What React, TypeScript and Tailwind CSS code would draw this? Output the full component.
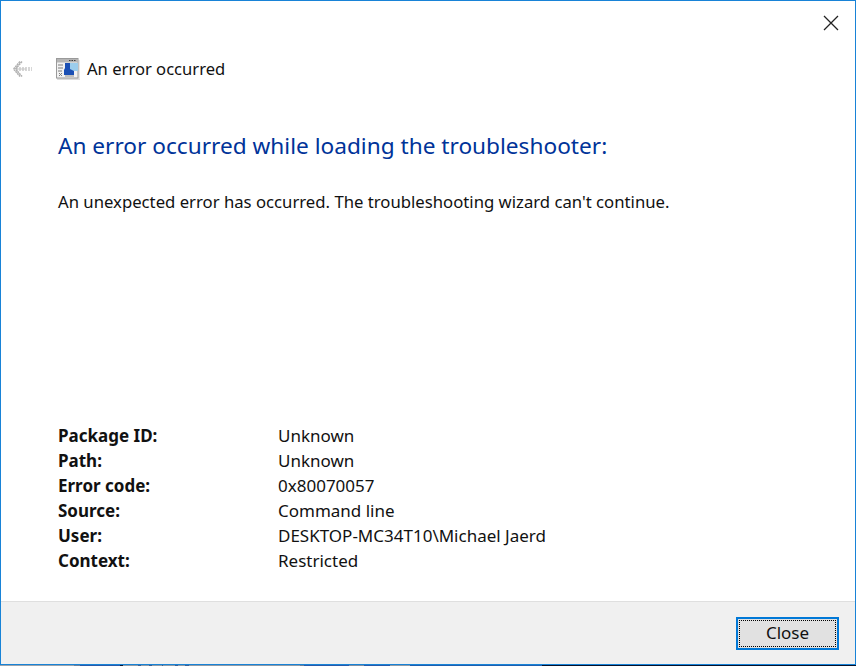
const font = { fontFamily: '"Noto Sans", "Open Sans", sans-serif' };

const details = [
  ["Package ID:", "Unknown"],
  ["Path:", "Unknown"],
  ["Error code:", "0x80070057"],
  ["Source:", "Command line"],
  ["User:", "DESKTOP-MC34T10\\Michael Jaerd"],
  ["Context:", "Restricted"],
];

function BackArrow() {
  return (
    <svg width="21" height="16" viewBox="0 0 21 16" fill="none" stroke="#b0b0b0">
      <path d="M8 .5 1.5 8 8 15.5M10 .5 3.5 8l6.5 7.5" strokeWidth="1.5" strokeDasharray="2 .6" />
      <path d="M4 7h16M4 9h16" strokeWidth="1.2" strokeDasharray="2 1" />
      <path d="M5 8h9" stroke="#c8c8c8" />
    </svg>
  );
}

function TroubleshooterIcon() {
  return (
    <svg width="24" height="22" viewBox="0 0 24 22">
      <rect x="1" y="20" width="23" height="2" fill="#dcdcdc" />
      <rect x="22" y="2" width="2" height="19" fill="#e6e6e6" />
      <rect x="0.5" y="0.5" width="21.5" height="19.5" fill="#f2f2f2" stroke="#9a9a9a" />
      <rect x="1" y="1" width="21" height="3.5" fill="#b5b5b5" />
      <path d="M13 2.5h1.5M15.5 2.5H17M18 2.5h1.5" stroke="#3c3c3c" />
      <rect x="14" y="5" width="8" height="8" fill="#9ccdec" />
      <path d="M9 5h5v6l4 2v4H8v-5l1-2z" fill="#1a4fb4" />
      <path d="M2 7h5M2 10h5M2 13h4M3 15l3 3M6 15l-3 3" stroke="#7d7d7d" />
      <path d="M9 18h9" stroke="#8a8a8a" />
    </svg>
  );
}

function BottomEdge() {
  return (
    <div className="flex h-px shrink-0 w-full">
      <div className="w-[74px] bg-[#9aa3ad]" />
      <div className="w-[6px] bg-[#6f8099]" />
      <div className="w-[40px] bg-[#2a5aa8]" />
      <div className="w-[3px] bg-[#0b1733]" />
      <div className="w-[15px] bg-[#8f9aa6]" />
      <div className="w-[3px] bg-[#3d5f92]" />
      <div className="w-[8px] bg-[#8f9aa6]" />
      <div className="w-[3px] bg-[#3d5f92]" />
      <div className="w-[10px] bg-[#8f9aa6]" />
      <div className="w-px bg-[#3d5f92]" />
      <div className="w-[12px] bg-[#8f9aa6]" />
      <div className="w-[3px] bg-[#3d5f92]" />
      <div className="w-[7px] bg-[#8f9aa6]" />
      <div className="w-[4px] bg-[#3d5f92]" />
      <div className="w-[111px] bg-[#8f9aa6]" />
      <div className="w-[4px] bg-[#6f8099]" />
      <div className="w-[45px] bg-[#2a5aa8]" />
      <div className="w-[15px] bg-[#7f8ea3]" />
      <div className="w-[26px] bg-[#2a5aa8]" />
      <div className="w-[20px] bg-[#8f9aa6]" />
      <div className="w-[132px] bg-[#1f5fae]" />
      <div className="flex-1 bg-[#06122b]" />
    </div>
  );
}

export default function App() {
  return (
    <div className="w-[856px] h-[666px] flex flex-col bg-white text-[#111] overflow-hidden" style={font}>
      <div className="flex-1 min-h-0 flex flex-col border-x border-t border-[#1883d7]">
        <div className="flex justify-end pt-[14px] pr-[16px]">
          <svg width="16" height="16" viewBox="0 0 16 16" stroke="#222" strokeWidth="1.3">
            <path d="M1 1l14 14M15 1 1 15" />
          </svg>
        </div>
        <div className="flex items-center h-[24px] mt-[26px] pl-[11px]">
          <BackArrow />
          <div className="ml-[23px]">
            <TroubleshooterIcon />
          </div>
          <span className="ml-[7px] text-[16.6px] leading-[24px]">An error occurred</span>
        </div>
        <h1 className="mt-[49px] ml-[57px] text-[22.65px] leading-[32px] text-[#003399]">
          An error occurred while loading the troubleshooter:
        </h1>
        <p className="mt-[28px] ml-[57px] text-[16.72px] leading-[24px]">
          An unexpected error has occurred. The troubleshooting wizard can't continue.
        </p>
        <div className="mt-auto mb-[28px] ml-[57px] grid grid-cols-[220px_1fr] text-[17px] leading-[25px]">
          {details.map(([label, value]) => (
            <div key={label} className="contents">
              <div className="font-bold">{label}</div>
              <div>{value}</div>
            </div>
          ))}
        </div>
        <div className="h-[63px] shrink-0 flex items-center justify-end pr-[16px] bg-[#f0f0f0] border-t border-[#dfdfdf]">
          <button className="w-[103px] h-[33px] border-2 border-[#0078d7] bg-[#e1e1e1] p-px">
            <span className="flex items-center justify-center w-full h-full border border-dotted border-black text-[17px]">
              Close
            </span>
          </button>
        </div>
      </div>
      <div className="h-px shrink-0 bg-[#1883d7]" />
      <BottomEdge />
    </div>
  );
}
